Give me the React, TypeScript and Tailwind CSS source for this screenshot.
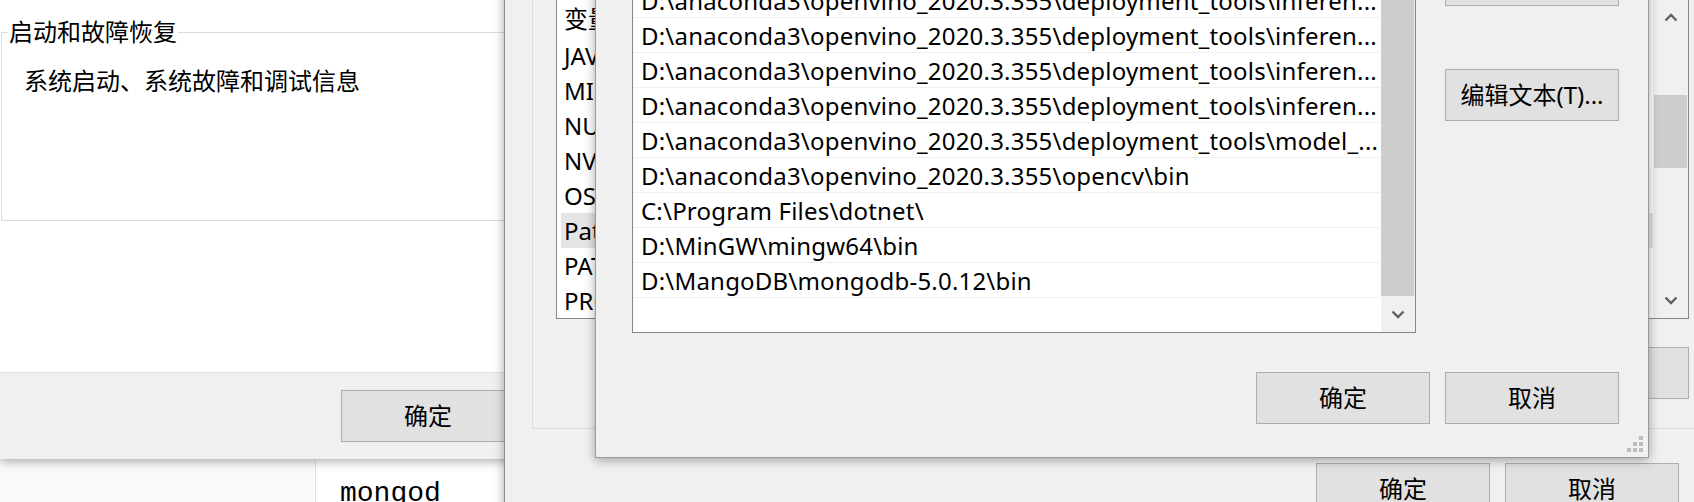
import React from "react";

const SANS = "[font-family:'Noto_Sans','Noto_Sans_CJK_SC',sans-serif]";

function Btn({ label }: { label: string }) {
  return (
    <div className="flex h-[52px] w-[174px] shrink-0 items-center justify-center border border-[#adadad] bg-[#e1e1e1] text-[24px] leading-[24px] text-black">
      {label}
    </div>
  );
}

function Chevron({ dir }: { dir: "up" | "down" }) {
  return (
    <svg width="14" height="9" viewBox="0 0 14 9">
      <path
        d={dir === "down" ? "M1.5 1.5L7 7L12.5 1.5" : "M1.5 7.5L7 2L12.5 7.5"}
        fill="none"
        stroke="#606060"
        strokeWidth="2.4"
      />
    </svg>
  );
}

const rowsB = [
  "JAVA_HOME",
  "MIC_LD_LIBRARY_PATH",
  "NUMBER_OF_PROCESSORS",
  "NVCUDASAMPLES_ROOT",
  "OS",
  "Path",
  "PATHEXT",
  "PROCESSOR_ARCHITECTURE",
];

const rowsC = [
  "D:\\anaconda3\\openvino_2020.3.355\\deployment_tools\\ngraph\\lib",
  "D:\\anaconda3\\openvino_2020.3.355\\deployment_tools\\inferen...",
  "D:\\anaconda3\\openvino_2020.3.355\\deployment_tools\\inferen...",
  "D:\\anaconda3\\openvino_2020.3.355\\deployment_tools\\inferen...",
  "D:\\anaconda3\\openvino_2020.3.355\\deployment_tools\\inferen...",
  "D:\\anaconda3\\openvino_2020.3.355\\deployment_tools\\model_...",
  "D:\\anaconda3\\openvino_2020.3.355\\opencv\\bin",
  "C:\\Program Files\\dotnet\\",
  "D:\\MinGW\\mingw64\\bin",
  "D:\\MangoDB\\mongodb-5.0.12\\bin",
];

export default function App() {
  return (
    <div className={"relative h-[502px] w-[1694px] overflow-hidden bg-[#f0f0f0] text-black " + SANS}>
      {/* back window with mongod text */}
      <div className="absolute left-0 top-[440px] flex h-[80px] w-[520px]">
        <div className="w-[316px] border-r border-[#e3e3e3] bg-[#fafafa]" />
        <div className="flex-1 bg-white pl-[24px] pt-[40px] text-[28px] leading-[28px] [font-family:'Liberation_Mono',monospace]">
          mongod
        </div>
      </div>

      {/* 启动和故障恢复 window */}
      <div className="absolute left-0 top-0 flex h-[459px] w-[560px] flex-col bg-white shadow-[0_2px_10px_rgba(0,0,0,0.35)]">
        <div className="relative ml-[1px] mt-[32px] h-[189px] border border-[#dcdcdc]">
          <span className="absolute left-[6px] top-[-13px] bg-white px-[1px] text-[24px] leading-[24px]">
            启动和故障恢复
          </span>
          <div className="ml-[22px] mt-[36px] text-[24px] leading-[24px]">系统启动、系统故障和调试信息</div>
        </div>
        <div className="flex-1" />
        <div className="h-[87px] border-t border-[#dfdfdf] bg-[#f0f0f0] pl-[341px] pt-[17px]">
          <Btn label="确定" />
        </div>
      </div>

      {/* 环境变量 window */}
      <div className="absolute left-[504px] top-[-40px] h-[600px] w-[1236px] border-l border-[#8f8f8f] bg-[#f0f0f0] pl-[27px] shadow-[0_2px_10px_rgba(0,0,0,0.35)]">
        <div className="w-[1181px]">
          <div className="mt-[20px] border border-[#dcdcdc] px-[23px] pb-[29px] pt-[18px]">
            <div className="flex h-[320px] border border-[#828790] bg-white">
              <div className="flex-1 overflow-hidden pl-[4px] text-[24px] leading-[24px]">
                <div className="flex h-[38px] items-center whitespace-nowrap pl-[3px]">变量</div>
                {rowsB.map((r) => (
                  <div
                    key={r}
                    className={
                      "flex h-[35px] items-center whitespace-nowrap pl-[3px] " +
                      (r === "Path" ? "bg-[#e5e5e5]" : "")
                    }
                  >
                    {r}
                  </div>
                ))}
              </div>
              <div className="flex w-[35px] flex-col bg-[#f0f0f0]">
                <div className="flex h-[35px] items-center justify-center">
                  <Chevron dir="up" />
                </div>
                <div className="mx-[1px] mt-[60px] h-[73px] bg-[#cdcdcd]" />
                <div className="mt-auto flex h-[35px] items-center justify-center">
                  <Chevron dir="down" />
                </div>
              </div>
            </div>
            <div className="mt-[28px] flex justify-end gap-[15px]">
              <Btn label="新建(W)..." />
              <Btn label="编辑(I)..." />
              <Btn label="删除(L)" />
            </div>
          </div>
          <div className="mt-[34px] flex justify-end gap-[15px] pr-[34px]">
            <Btn label="确定" />
            <Btn label="取消" />
          </div>
        </div>
      </div>

      {/* 编辑环境变量 window */}
      <div className="absolute left-[595px] top-[-70px] h-[528px] w-[1054px] border border-[#9a9a9a] bg-[#f0f0f0] shadow-[0_2px_10px_rgba(0,0,0,0.35)]">
        <div className="flex pl-[36px] pr-[29px]">
          <div className="mt-[16px] flex h-[386px] w-[784px] border border-[#828790] bg-white">
            <div className="flex-1 overflow-hidden text-[24px] leading-[24px] tracking-[0.2px]">
              {rowsC.map((r, i) => (
                <div
                  key={i}
                  className="flex h-[35px] items-center whitespace-nowrap border-b border-[#f0f0f0] pl-[8px] pt-[1px]"
                >
                  {r}
                </div>
              ))}
            </div>
            <div className="flex w-[34px] flex-col bg-[#f0f0f0]">
              <div className="flex h-[35px] items-center justify-center">
                <Chevron dir="up" />
              </div>
              <div className="mr-[1px] h-[313px] bg-[#cdcdcd]" />
              <div className="flex flex-1 items-center justify-center">
                <Chevron dir="down" />
              </div>
            </div>
          </div>
          <div className="ml-[29px] mt-[23px] flex flex-col">
            <Btn label="下移(O)" />
            <div className="mt-[63px]">
              <Btn label="编辑文本(T)..." />
            </div>
          </div>
        </div>
        <div className="mt-[39px] flex justify-end gap-[15px] pr-[29px]">
          <Btn label="确定" />
          <Btn label="取消" />
        </div>
        <svg className="absolute bottom-[4px] right-[4px]" width="17" height="17" viewBox="0 0 17 17">
          <rect x="12" y="0" width="4" height="4" fill="#bcbcbc" />
          <rect x="6" y="6" width="4" height="4" fill="#bcbcbc" />
          <rect x="12" y="6" width="4" height="4" fill="#bcbcbc" />
          <rect x="0" y="12" width="4" height="4" fill="#bcbcbc" />
          <rect x="6" y="12" width="4" height="4" fill="#bcbcbc" />
          <rect x="12" y="12" width="4" height="4" fill="#bcbcbc" />
        </svg>
      </div>
    </div>
  );
}
